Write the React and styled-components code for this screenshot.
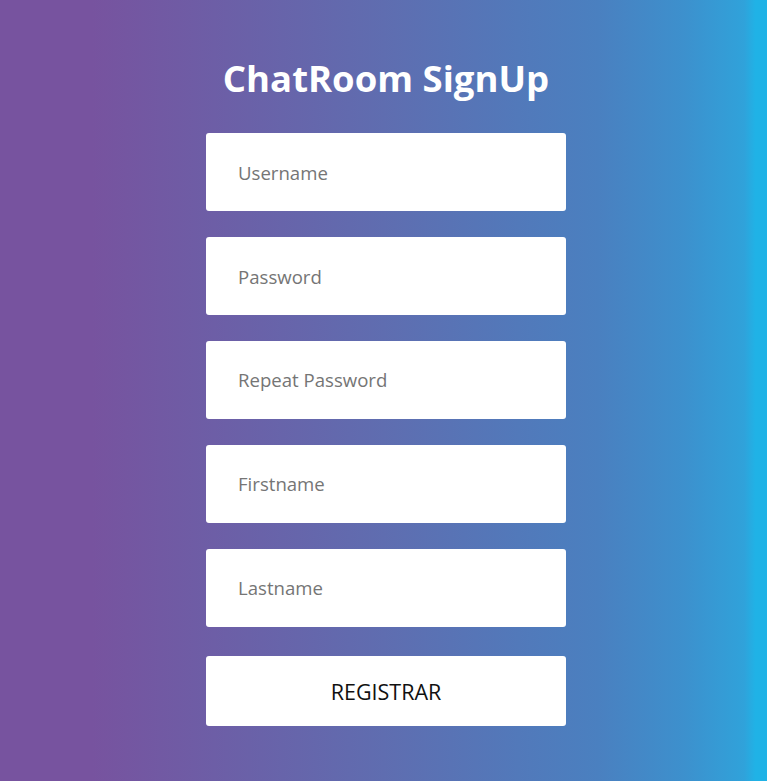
import styled, { createGlobalStyle } from 'styled-components';

const GlobalStyle = createGlobalStyle`
	html, body {
		margin: 0;
		padding: 0;
	}
	body {
		font-family: 'Open Sans', 'Noto Sans', sans-serif;
	}
`;

const Page = styled.div`
	min-height: 781px;
	box-sizing: border-box;
	background: linear-gradient(
		to right,
		#77539f 0%,
		#77539f 12%,
		#5f6db0 50%,
		#4a80c0 78%,
		#3d90cd 89%,
		#30a2da 97%,
		#20b2e6 98.5%,
		#1fb2e6 100%
	);
	display: flex;
	flex-direction: column;
	align-items: center;
	padding: 54px 0 0 5px;
`;

const Title = styled.h1`
	margin: 0 0 31px;
	color: #fff;
	font-size: 36.5px;
	font-weight: 700;
	line-height: 48px;
	text-align: center;
`;

const Form = styled.form`
	width: 360px;
	display: flex;
	flex-direction: column;
	gap: 25.6px;
`;

const Field = styled.input`
	height: 78.3px;
	box-sizing: border-box;
	border: none;
	border-radius: 3px;
	background: #fff;
	padding: 0 32px;
	font-family: inherit;
	font-size: 18.6px;
	color: #333;
	outline: none;

	&::placeholder {
		color: #757575;
	}
`;

const SubmitButton = styled.button`
	height: 70px;
	margin-top: 4px;
	border: none;
	border-radius: 3px;
	background: #fff;
	font-family: inherit;
	font-size: 21.5px;
	color: #111;
	cursor: pointer;
`;

const fields = [
	{ name: 'username', type: 'text', placeholder: 'Username' },
	{ name: 'password', type: 'password', placeholder: 'Password' },
	{ name: 'repeat', type: 'password', placeholder: 'Repeat Password' },
	{ name: 'firstname', type: 'text', placeholder: 'Firstname' },
	{ name: 'lastname', type: 'text', placeholder: 'Lastname' },
];

export default function App() {
	return (
		<>
			<GlobalStyle />
			<Page>
				<Title>ChatRoom SignUp</Title>
				<Form onSubmit={(e) => e.preventDefault()}>
					{fields.map((f) => (
						<Field key={f.name} name={f.name} type={f.type} placeholder={f.placeholder} />
					))}
					<SubmitButton type="submit">REGISTRAR</SubmitButton>
				</Form>
			</Page>
		</>
	);
}
